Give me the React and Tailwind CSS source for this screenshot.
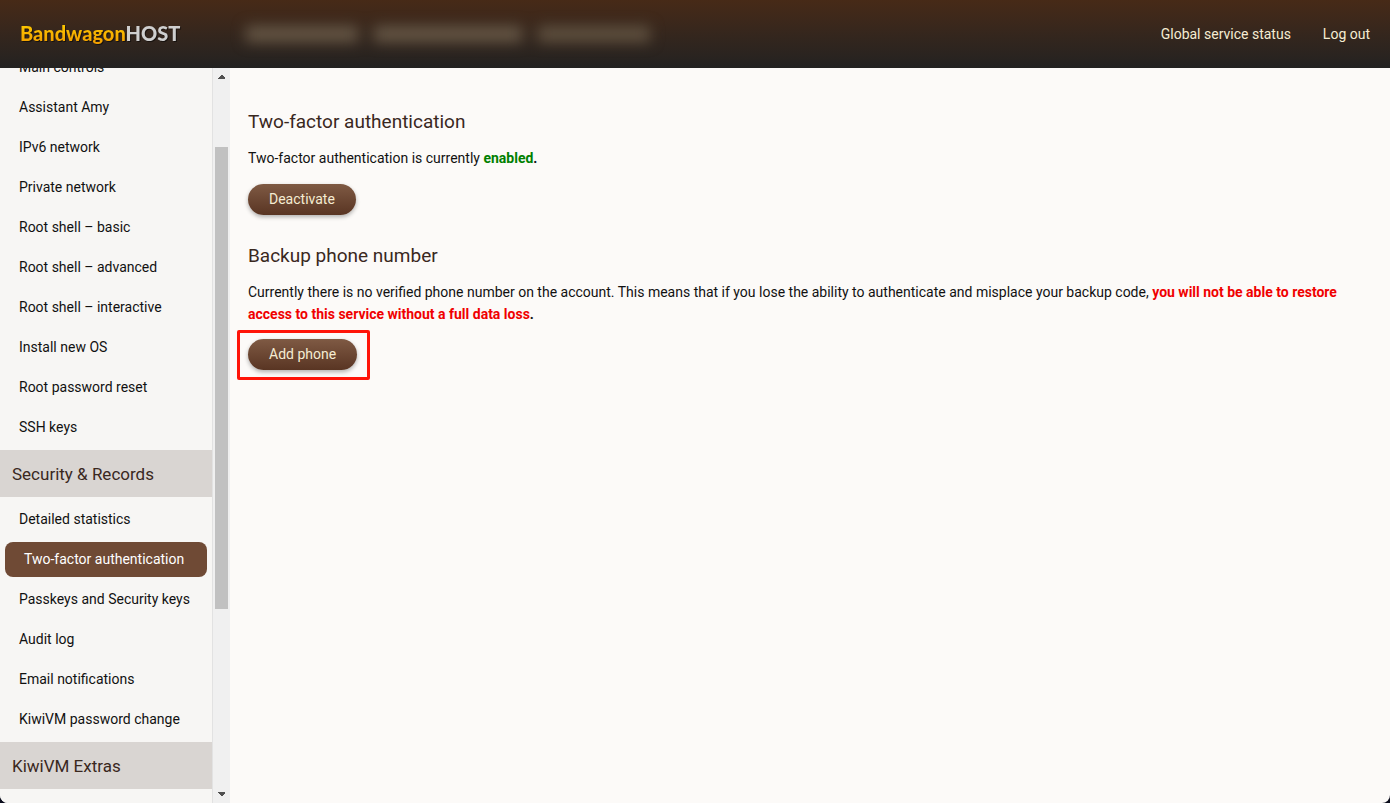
import React, { useLayoutEffect, useRef } from "react";
import clsx from "clsx";

const sections = [
  {
    items: [
      "Main controls",
      "Assistant Amy",
      "IPv6 network",
      "Private network",
      "Root shell – basic",
      "Root shell – advanced",
      "Root shell – interactive",
      "Install new OS",
      "Root password reset",
      "SSH keys",
    ],
  },
  {
    title: "Security & Records",
    items: [
      "Detailed statistics",
      "Two-factor authentication",
      "Passkeys and Security keys",
      "Audit log",
      "Email notifications",
      "KiwiVM password change",
    ],
  },
  { title: "KiwiVM Extras", items: [] },
];

const Header = () => (
  <header className="flex h-[68px] shrink-0 items-center bg-linear-to-b from-[#472a17] to-[#232221] px-5 text-[#f5ecd2]">
    <a
      href="#"
      className="w-[226px] shrink-0 pb-[2px] font-[Lato,sans-serif] text-xl leading-6 font-black drop-shadow-[1px_1px_0_rgba(0,0,0,0.5)]"
    >
      <span className="bg-linear-to-b from-[#ffd000] to-[#f09a00] bg-clip-text text-transparent">Bandwagon</span>
      <span className="text-[#cfcfcf]">HOST</span>
    </a>
    <div className="flex items-center gap-4 blur-[7px]" aria-hidden="true">
      <div className="h-4 w-[112px] bg-[#655645]" />
      <div className="h-4 w-[148px] bg-[#655645]" />
      <div className="h-4 w-[112px] bg-[#5f503f]" />
    </div>
    <nav className="ml-auto flex gap-8">
      <a href="#">Global service status</a>
      <a href="#">Log out</a>
    </nav>
  </header>
);

const Scrollbar = () => (
  <div className="flex w-[17px] shrink-0 flex-col items-center bg-[#f0f0f0] py-[7px]" aria-hidden="true">
    <svg width="7" height="4" viewBox="0 0 7 4" shapeRendering="crispEdges">
      <path d="M3 0H4L7 3V4H0V3z" fill="#505050" />
    </svg>
    <div className="min-h-0 grow-[68]" />
    <div className="min-h-0 w-[13px] grow-[462] bg-[#c1c1c1]" />
    <div className="min-h-0 grow-[183]" />
    <svg width="7" height="4" viewBox="0 0 7 4" shapeRendering="crispEdges">
      <path d="M0 0H7V1L4 4H3L0 1z" fill="#505050" />
    </svg>
  </div>
);

const Sidebar = ({ active }) => {
  const list = useRef(null);

  useLayoutEffect(() => {
    list.current.scrollTop = 21;
  }, []);

  return (
    <aside className="flex min-h-0 shrink-0">
      <nav
        ref={list}
        className="w-[213px] overflow-y-auto border-r border-[#e2e2e2] bg-[#f7f6f4] pb-12 [scrollbar-width:none]"
      >
        {sections.map((section, i) => (
          <div key={i}>
            {section.title && (
              <h2 className="bg-[#d9d5d2] px-3 pt-3 pb-[11px] text-[17px] leading-6 text-[#3a281e]">
                {section.title}
              </h2>
            )}
            <ul className={clsx("flex flex-col gap-[5px]", section.title ? "py-[5px]" : "pt-[3px] pb-[5px]")}>
              {section.items.map((item) => (
                <li key={item} className="px-[5px]">
                  <a
                    href="#"
                    className={clsx(
                      "flex h-[35px] items-center rounded-lg pb-[2px] whitespace-nowrap",
                      item === active ? "bg-[#6f4a35] px-[19px] text-white" : "px-[14px]"
                    )}
                  >
                    {item}
                  </a>
                </li>
              ))}
            </ul>
          </div>
        ))}
      </nav>
      <Scrollbar />
    </aside>
  );
};

const Button = ({ children }) => (
  <button
    type="button"
    className="h-[31px] rounded-full bg-linear-to-b from-[#7f5a44] to-[#593523] px-[21px] pb-[2px] text-[#f5ecd2] shadow-[0_2px_4px_rgba(0,0,0,0.3)]"
  >
    {children}
  </button>
);

const Title = ({ children }) => (
  <h2 className="mb-[11px] text-[19px] leading-7 text-[#3a281e]">{children}</h2>
);

const App = () => (
  <div className="h-screen bg-[#0b0d1c]">
    <div className="flex h-full flex-col overflow-hidden rounded-b-lg bg-[#fcfaf8] font-[Roboto,sans-serif] text-sm leading-[22px] text-[#111111]">
      <Header />
      <div className="flex min-h-0 flex-1">
        <Sidebar active="Two-factor authentication" />
        <main className="min-w-0 flex-1 overflow-y-auto px-[18px] pt-10">
          <section className="mb-[27px]">
            <Title>Two-factor authentication</Title>
            <p className="mb-[15px]">
              Two-factor authentication is currently <b className="text-[#008000]">enabled</b>
              <b>.</b>
            </p>
            <div className="flex">
              <Button>Deactivate</Button>
            </div>
          </section>
          <section>
            <Title>Backup phone number</Title>
            <p className="mb-[14px]">
              Currently there is no verified phone number on the account. This means that if you lose the ability to
              authenticate and misplace your backup code,{" "}
              <b className="text-[#f00000]">
                you will not be able to restore access to this service without a full data loss
              </b>
              <b>.</b>
            </p>
            <div className="relative inline-flex">
              <Button>Add phone</Button>
              <div className="pointer-events-none absolute -top-[9px] -right-[13px] -bottom-[10px] -left-[11px] rounded-xs border-3 border-[#ff1408]" />
            </div>
          </section>
        </main>
      </div>
    </div>
  </div>
);

export default App;
